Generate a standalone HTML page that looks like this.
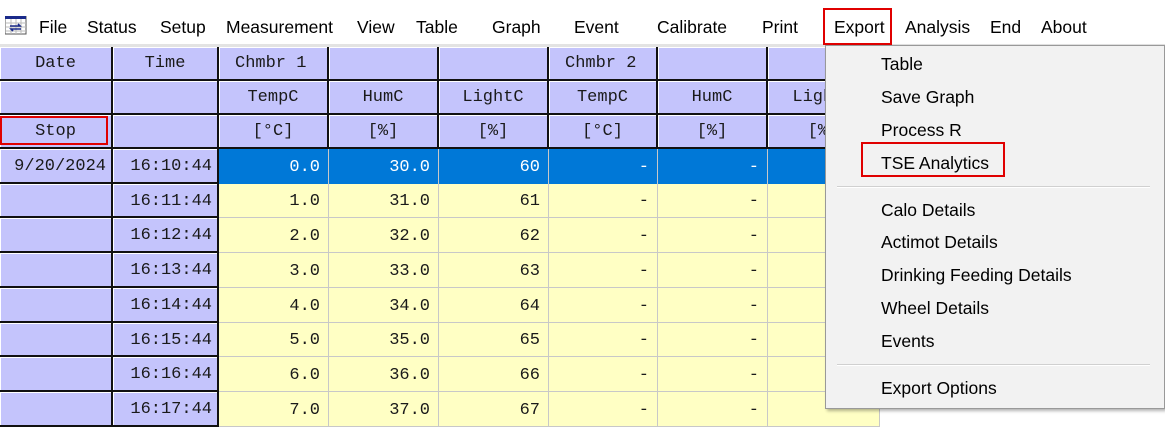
<!DOCTYPE html>
<html><head><meta charset="utf-8"><style>
body{margin:0;width:1165px;height:411px;overflow:hidden;background:#fff;position:relative;font-family:"Liberation Sans",sans-serif}
.mb{position:absolute;top:0;left:0;width:1165px;height:44px;background:#fff;border-bottom:3px solid #e3e3e3}
.mi{position:absolute;top:17px;font-size:17.5px;color:#000}
.c{position:absolute;box-sizing:border-box;font-family:"Liberation Mono",monospace;font-size:17px;color:#1a1a1a;line-height:1;display:flex;align-items:center}
.h{background:#c4c4fc;border-right:2px solid #111;border-bottom:2px solid #111;box-shadow:inset 1px 1px 0 #fff;justify-content:center}
.y{background:#ffffc4;border-right:1px solid #c8c8c8;border-bottom:1px solid #c8c8c8;justify-content:flex-end;padding-right:8px}
.b{background:#0078d7;color:#fff;border-right:1px solid #c8c8c8;justify-content:flex-end;padding-right:8px}
.r{justify-content:flex-end;padding-right:5px}
.dd{position:absolute;left:825px;top:45px;width:338px;height:362px;background:#f2f2f2;border:1px solid #999;box-shadow:2px 2px 3px rgba(0,0,0,.3)}
.it{position:absolute;left:55px;font-size:17.5px;color:#000}
.sep{position:absolute;left:11px;width:313px;height:1px;background:#d0d0d0;border-bottom:1px solid #fff}
</style></head><body>
<div class="mb"></div>
<svg style="position:absolute;left:5px;top:16px" width="22" height="19"><rect x="0" y="0" width="21" height="18" fill="#fff" stroke="#555"/><rect x="0" y="0" width="21" height="3" fill="#1a2a8a"/><path d="M1 7h20M1 11h20M1 15h20M6 3v15M11 3v15M16 3v15" stroke="#bbb"/><path d="M5 10h10l-2-2M16 13H6l2 2" stroke="#1a2a8a" stroke-width="1.6" fill="none"/></svg>
<span class="mi" style="left:39px">File</span>
<span class="mi" style="left:87px">Status</span>
<span class="mi" style="left:160px">Setup</span>
<span class="mi" style="left:226px">Measurement</span>
<span class="mi" style="left:357px">View</span>
<span class="mi" style="left:416px">Table</span>
<span class="mi" style="left:492px">Graph</span>
<span class="mi" style="left:574px">Event</span>
<span class="mi" style="left:657px">Calibrate</span>
<span class="mi" style="left:762px">Print</span>
<span class="mi" style="left:834px">Export</span>
<span class="mi" style="left:905px">Analysis</span>
<span class="mi" style="left:990px">End</span>
<span class="mi" style="left:1041px">About</span>
<div style="position:absolute;left:823px;top:8px;width:65px;height:33px;border:2px solid #e00000"></div>

<div id="t"></div>
<script>
var xs=[0,113,219,329,439,549,658,768,880];
var out='';
function cell(cls,i,y,h,txt,extra){out+='<div class="c '+cls+'" style="left:'+xs[i]+'px;top:'+y+'px;width:'+(xs[i+1]-xs[i])+'px;height:'+h+'px;'+(extra||'')+'">'+txt+'</div>';}
var hdr=[["Date","Time","Chmbr 1","","","Chmbr 2","",""],["","","TempC","HumC","LightC","TempC","HumC","LightC"],["Stop","","[°C]","[%]","[%]","[°C]","[%]","[%]"]];
for(var r=0;r<3;r++)for(var i=0;i<8;i++){var t=hdr[r][i];cell('h',i,47+r*34,34,t,((r==0&&(i==2||i==5))?'justify-content:flex-start;padding-left:16px;':''));}
for(var d=0;d<8;d++){var y=Math.round(149+d*34.7),h=Math.round(149+(d+1)*34.7)-y;
cell('h r',0,y,h,d==0?'9/20/2024':'','padding-top:2px;');
cell('h r',1,y,h,'16:1'+d+':44','padding-top:2px;');
var v=[d+'.0',(30+d)+'.0',''+(60+d),'-','-',''];
for(var k=0;k<6;k++)cell(d==0?'b':'y',k+2,y,h,v[k],'padding-top:2px;');}
document.getElementById('t').outerHTML=out;
</script>
<div style="position:absolute;left:0;top:116px;width:108px;height:29px;border:2px solid #e00000;box-sizing:border-box"></div>

<div class="dd">
<span class="it" style="top:8px">Table</span>
<span class="it" style="top:41px">Save Graph</span>
<span class="it" style="top:74px">Process R</span>
<span class="it" style="top:107px">TSE Analytics</span>
<div class="sep" style="top:140px"></div>
<span class="it" style="top:154px">Calo Details</span>
<span class="it" style="top:186px">Actimot Details</span>
<span class="it" style="top:219px">Drinking Feeding Details</span>
<span class="it" style="top:252px">Wheel Details</span>
<span class="it" style="top:285px">Events</span>
<div class="sep" style="top:318px"></div>
<span class="it" style="top:332px">Export Options</span>
</div>
<div style="position:absolute;left:861px;top:142px;width:144px;height:35px;border:2px solid #e00000;box-sizing:border-box"></div>
</body></html>
